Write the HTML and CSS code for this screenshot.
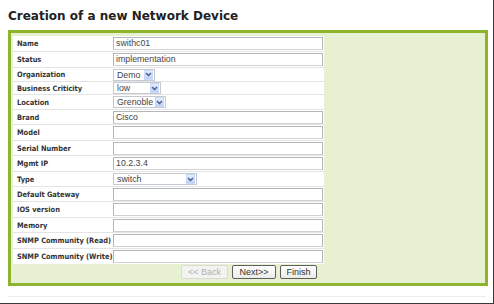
FILE: index.html
```html
<!DOCTYPE html>
<html>
<head>
<meta charset="utf-8">
<link rel="stylesheet" href="styles.css">
</head>
<body>
<div class="frame">
  <h1 class="title">Creation of a new Network Device</h1>
  <div class="panel">
    <div class="form">
      <div class="row h16"><span class="lbl">Name</span><div class="txt">swithc01</div></div>
      <div class="row h16"><span class="lbl">Status</span><div class="txt">implementation</div></div>
      <div class="row h14"><span class="lbl">Organization</span><div class="sel w42"><span class="v">Demo</span><span class="arr"><svg width="7" height="5" viewBox="0 0 7 5"><path d="M1 1 L3.5 3.5 L6 1" fill="none" stroke="#4a5f8a" stroke-width="1.5"/></svg></span></div></div>
      <div class="row h13"><span class="lbl">Business Criticity</span><div class="sel w48"><span class="v">low</span><span class="arr"><svg width="7" height="5" viewBox="0 0 7 5"><path d="M1 1 L3.5 3.5 L6 1" fill="none" stroke="#4a5f8a" stroke-width="1.5"/></svg></span></div></div>
      <div class="row h15"><span class="lbl">Location</span><div class="sel w53"><span class="v">Grenoble</span><span class="arr"><svg width="7" height="5" viewBox="0 0 7 5"><path d="M1 1 L3.5 3.5 L6 1" fill="none" stroke="#4a5f8a" stroke-width="1.5"/></svg></span></div></div>
      <div class="row h15"><span class="lbl">Brand</span><div class="txt">Cisco</div></div>
      <div class="row h16"><span class="lbl">Model</span><div class="txt"></div></div>
      <div class="row h15"><span class="lbl">Serial Number</span><div class="txt"></div></div>
      <div class="row h16"><span class="lbl">Mgmt IP</span><div class="txt">10.2.3.4</div></div>
      <div class="row h15"><span class="lbl">Type</span><div class="sel w84"><span class="v">switch</span><span class="arr"><svg width="7" height="5" viewBox="0 0 7 5"><path d="M1 1 L3.5 3.5 L6 1" fill="none" stroke="#4a5f8a" stroke-width="1.5"/></svg></span></div></div>
      <div class="row h15"><span class="lbl">Default Gateway</span><div class="txt"></div></div>
      <div class="row h16"><span class="lbl">IOS version</span><div class="txt"></div></div>
      <div class="row h15"><span class="lbl">Memory</span><div class="txt"></div></div>
      <div class="row h16"><span class="lbl">SNMP Community (Read)</span><div class="txt"></div></div>
      <div class="row h15 last"><span class="lbl">SNMP Community (Write)</span><div class="txt"></div></div>
    </div>
    <div class="buttons">
      <span class="btn dis">&lt;&lt; Back</span>
      <span class="btn next">Next&gt;&gt;</span>
      <span class="btn fin">Finish</span>
    </div>
  </div>
  <div class="shadow"></div>
</div>
</body>
</html>
```

FILE: styles.css
```css
html, body { margin: 0; padding: 0; background: #fff; }
.frame {
  width: 485px;
  height: 303px;
  border-right: 1px solid #3a3a3a;
  border-bottom: 1px solid #3a3a3a;
  padding-left: 8px;
  overflow: hidden;
  font-family: "DejaVu Sans", Verdana, sans-serif;
}
.title {
  margin: 0;
  padding-top: 9px;
  height: 30px;
  box-sizing: border-box;
  font-size: 12px;
  font-weight: bold;
  color: #222;
  line-height: 14px;
}
.panel {
  width: 474px;
  border: 3px solid #8db32f;
  background: #e8f0d2;
  padding: 3px 0 4px 2px;
  box-sizing: content-box;
  width: 472px;
}
.form {
  background: #fff;
  width: 311px;
  display: flex;
  flex-direction: column;
}
.row {
  display: flex;
  align-items: center;
  border-bottom: 1px solid #e4e4e4;
  box-sizing: border-box;
}
.row.last { border-bottom: none; }
.h13 { height: 13px; }
.h14 { height: 14px; }
.h15 { height: 15px; }
.h16 { height: 16px; }
.lbl {
  width: 99px;
  flex: none;
  padding-left: 4px;
  box-sizing: border-box;
  font-family: "DejaVu Sans Condensed", "DejaVu Sans", sans-serif;
  font-stretch: condensed;
  font-size: 7.4px;
  font-weight: bold;
  color: #333;
  white-space: nowrap;
}
.txt {
  width: 210px;
  height: 13px;
  margin-left: 1px;
  border: 1px solid #b2b6b6;
  border-bottom-color: #d0d2d2;
  background: #fff;
  box-sizing: border-box;
  font-family: "Liberation Sans", Arial, sans-serif;
  font-size: 8.8px;
  line-height: 11px;
  color: #444;
  padding-left: 2px;
}
.sel {
  display: flex;
  height: 12px;
  margin-left: 1px;
  border: 1px solid #c3cad2;
  background: #fff;
  box-sizing: border-box;
  font-family: "Liberation Sans", Arial, sans-serif;
  font-size: 8.8px;
  line-height: 10px;
  color: #444;
}
.sel .v { flex: 1; padding-left: 3px; }
.sel .arr {
  width: 9px;
  margin: 0 1px 0 0;
  background: linear-gradient(#e6eefc, #bdd0f6);
  border: 1px solid #c9d7f8;
  box-sizing: border-box;
  display: flex;
  align-items: center;
  justify-content: center;
}
.w42 { width: 42px; }
.w48 { width: 48px; }
.w53 { width: 53px; }
.w84 { width: 84px; }
.buttons {
  width: 311px;
  display: flex;
  justify-content: flex-end;
  padding-top: 1px;
  padding-right: 7px;
  box-sizing: border-box;
}
.btn {
  height: 14px;
  box-sizing: border-box;
  border: 1px solid #5e5e5e;
  border-radius: 2px;
  background: linear-gradient(#ffffff, #ebebe6);
  font-family: "Liberation Sans", Arial, sans-serif;
  font-size: 9px;
  line-height: 12px;
  color: #333;
  display: flex;
  justify-content: center;
}
.btn.dis { width: 47px; color: #b0b0b0; border-color: #dadada; background: #f3f3ef; }
.btn.next { width: 44px; margin-left: 4px; }
.btn.fin { width: 37px; margin-left: 4px; }
.shadow {
  margin-top: 10px;
  width: 478px;
  border-top: 1px solid #ececec;
}
```
